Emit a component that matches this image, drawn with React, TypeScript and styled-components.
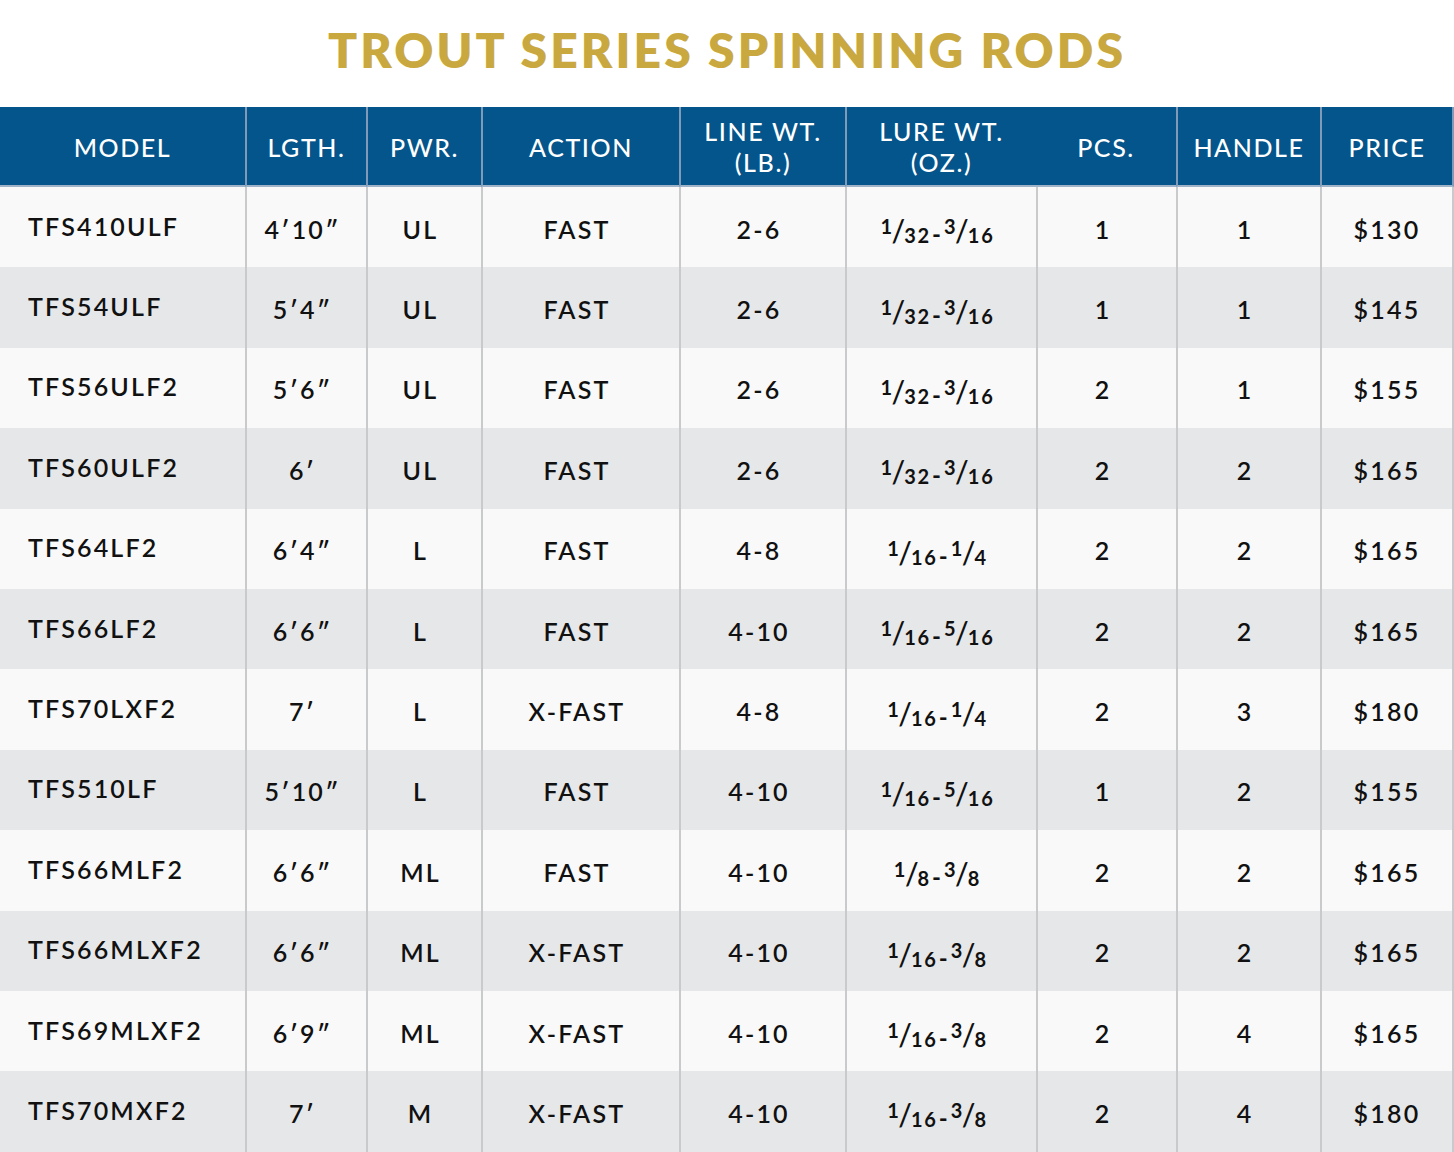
import React from "react";
import styled, { createGlobalStyle } from "styled-components";

const Global = createGlobalStyle`
  html, body { margin: 0; padding: 0; background: #ffffff; }
  body { font-family: Lato, "Noto Sans", sans-serif; }
`;

const Page = styled.div`
  width: 1454px;
  display: flex;
  flex-direction: column;
`;

const Title = styled.h1`
  margin: 0;
  height: 107px;
  display: flex;
  align-items: center;
  justify-content: center;
  color: #c9a93f;
  font-family: Lato, "Noto Sans", sans-serif;
  font-weight: 800;
  font-size: 48px;
  letter-spacing: 3.1px;
  padding-bottom: 8px;
  box-sizing: border-box;
`;

const Grid = styled.div`
  display: grid;
  grid-template-columns: 245px 121px 115px 198px 166px 191px 140px 144px 134px;
  grid-template-rows: 80px;
  grid-auto-rows: 80.4px;
`;

const HeadCell = styled.div<{ $first?: boolean; $last?: boolean; $noLeft?: boolean }>`
  background: #03558b;
  color: #ffffff;
  display: flex;
  align-items: center;
  justify-content: center;
  text-align: center;
  font-family: Lato, "Noto Sans", sans-serif;
  font-weight: 500;
  font-size: 25px;
  line-height: 31px;
  letter-spacing: 1.6px;
  box-sizing: border-box;
  border-left: ${(p) => (p.$first || p.$noLeft ? "0" : "2px solid #7f9bb8")};
  border-right: ${(p) => (p.$last ? "2px solid #7f9bb8" : "0")};
  border-bottom: 2px solid #9fb3c8;
  padding-top: 2px;
`;

const Cell = styled.div<{ $alt: boolean; $first?: boolean; $last?: boolean }>`
  background: ${(p) => (p.$alt ? "#e6e7e9" : "#f9f9f9")};
  color: #111111;
  display: flex;
  align-items: center;
  justify-content: ${(p) => (p.$first ? "flex-start" : "center")};
  padding-left: ${(p) => (p.$first ? "28px" : "0")};
  padding-right: ${(p) => (p.$first || p.$last ? "0" : "8px")};
  padding-top: ${(p) => (p.$first ? "0" : "3px")};
  padding-bottom: ${(p) => (p.$first ? "3px" : "0")};
  font-family: Lato, "Noto Sans", sans-serif;
  font-weight: 600;
  font-size: 25px;
  letter-spacing: 2.2px;
  box-sizing: border-box;
  border-left: ${(p) => (p.$first ? "0" : "2px solid #c9cacc")};
  border-right: ${(p) => (p.$last ? "2px solid #c9cacc" : "0")};
  white-space: nowrap;
`;

const RangeWrap = styled.span`
  display: inline-flex;
  align-items: center;
  letter-spacing: 0;
  padding-top: 6px;
`;

const FracWrap = styled.span`
  display: inline-flex;
  align-items: flex-start;
  height: 25px;
`;

const Num = styled.span`
  display: inline-block;
  font-size: 20px;
  font-weight: 700;
  line-height: 15px;
  letter-spacing: 1.5px;
`;

const Slash = styled.span`
  display: inline-block;
  font-size: 30px;
  line-height: 25px;
  font-weight: 500;
  margin: -1px -1px 0 -2px;
`;

const Den = styled.span`
  display: inline-block;
  font-size: 20px;
  font-weight: 700;
  line-height: 15px;
  margin-top: 9px;
  letter-spacing: 1.8px;
`;

const Dash = styled.span`
  display: inline-block;
  font-size: 24px;
  font-weight: 700;
  margin: 0 3px 0 1px;
  padding-top: 4px;
`;

const Frac = ({ v }: { v: string }) => {
  const [n, d] = v.split("/");
  return (
    <FracWrap>
      <Num>{n}</Num>
      <Slash>/</Slash>
      <Den>{d}</Den>
    </FracWrap>
  );
};

const Range = ({ v }: { v: string }) => {
  const [a, b] = v.split("-");
  return (
    <RangeWrap>
      <Frac v={a} />
      <Dash>-</Dash>
      <Frac v={b} />
    </RangeWrap>
  );
};

const rows: string[][] = [
  ["TFS410ULF", "4′10″", "UL", "FAST", "2-6", "1/32-3/16", "1", "1", "$130"],
  ["TFS54ULF", "5′4″", "UL", "FAST", "2-6", "1/32-3/16", "1", "1", "$145"],
  ["TFS56ULF2", "5′6″", "UL", "FAST", "2-6", "1/32-3/16", "2", "1", "$155"],
  ["TFS60ULF2", "6′", "UL", "FAST", "2-6", "1/32-3/16", "2", "2", "$165"],
  ["TFS64LF2", "6′4″", "L", "FAST", "4-8", "1/16-1/4", "2", "2", "$165"],
  ["TFS66LF2", "6′6″", "L", "FAST", "4-10", "1/16-5/16", "2", "2", "$165"],
  ["TFS70LXF2", "7′", "L", "X-FAST", "4-8", "1/16-1/4", "2", "3", "$180"],
  ["TFS510LF", "5′10″", "L", "FAST", "4-10", "1/16-5/16", "1", "2", "$155"],
  ["TFS66MLF2", "6′6″", "ML", "FAST", "4-10", "1/8-3/8", "2", "2", "$165"],
  ["TFS66MLXF2", "6′6″", "ML", "X-FAST", "4-10", "1/16-3/8", "2", "2", "$165"],
  ["TFS69MLXF2", "6′9″", "ML", "X-FAST", "4-10", "1/16-3/8", "2", "4", "$165"],
  ["TFS70MXF2", "7′", "M", "X-FAST", "4-10", "1/16-3/8", "2", "4", "$180"],
];

const headers: React.ReactNode[] = [
  "MODEL",
  "LGTH.",
  "PWR.",
  "ACTION",
  <>LINE WT.<br />(LB.)</>,
  <>LURE WT.<br />(OZ.)</>,
  "PCS.",
  "HANDLE",
  "PRICE",
];

export default function App() {
  return (
    <Page>
      <Global />
      <Title>TROUT SERIES SPINNING RODS</Title>
      <Grid>
        {headers.map((h, i) => (
          <HeadCell key={i} $first={i === 0} $last={i === 8} $noLeft={i === 6}>
            {h}
          </HeadCell>
        ))}
        {rows.map((r, ri) =>
          r.map((c, ci) => (
            <Cell key={`${ri}-${ci}`} $alt={ri % 2 === 1} $first={ci === 0} $last={ci === 8}>
              {ci === 5 ? <Range v={c} /> : c}
            </Cell>
          ))
        )}
      </Grid>
    </Page>
  );
}
